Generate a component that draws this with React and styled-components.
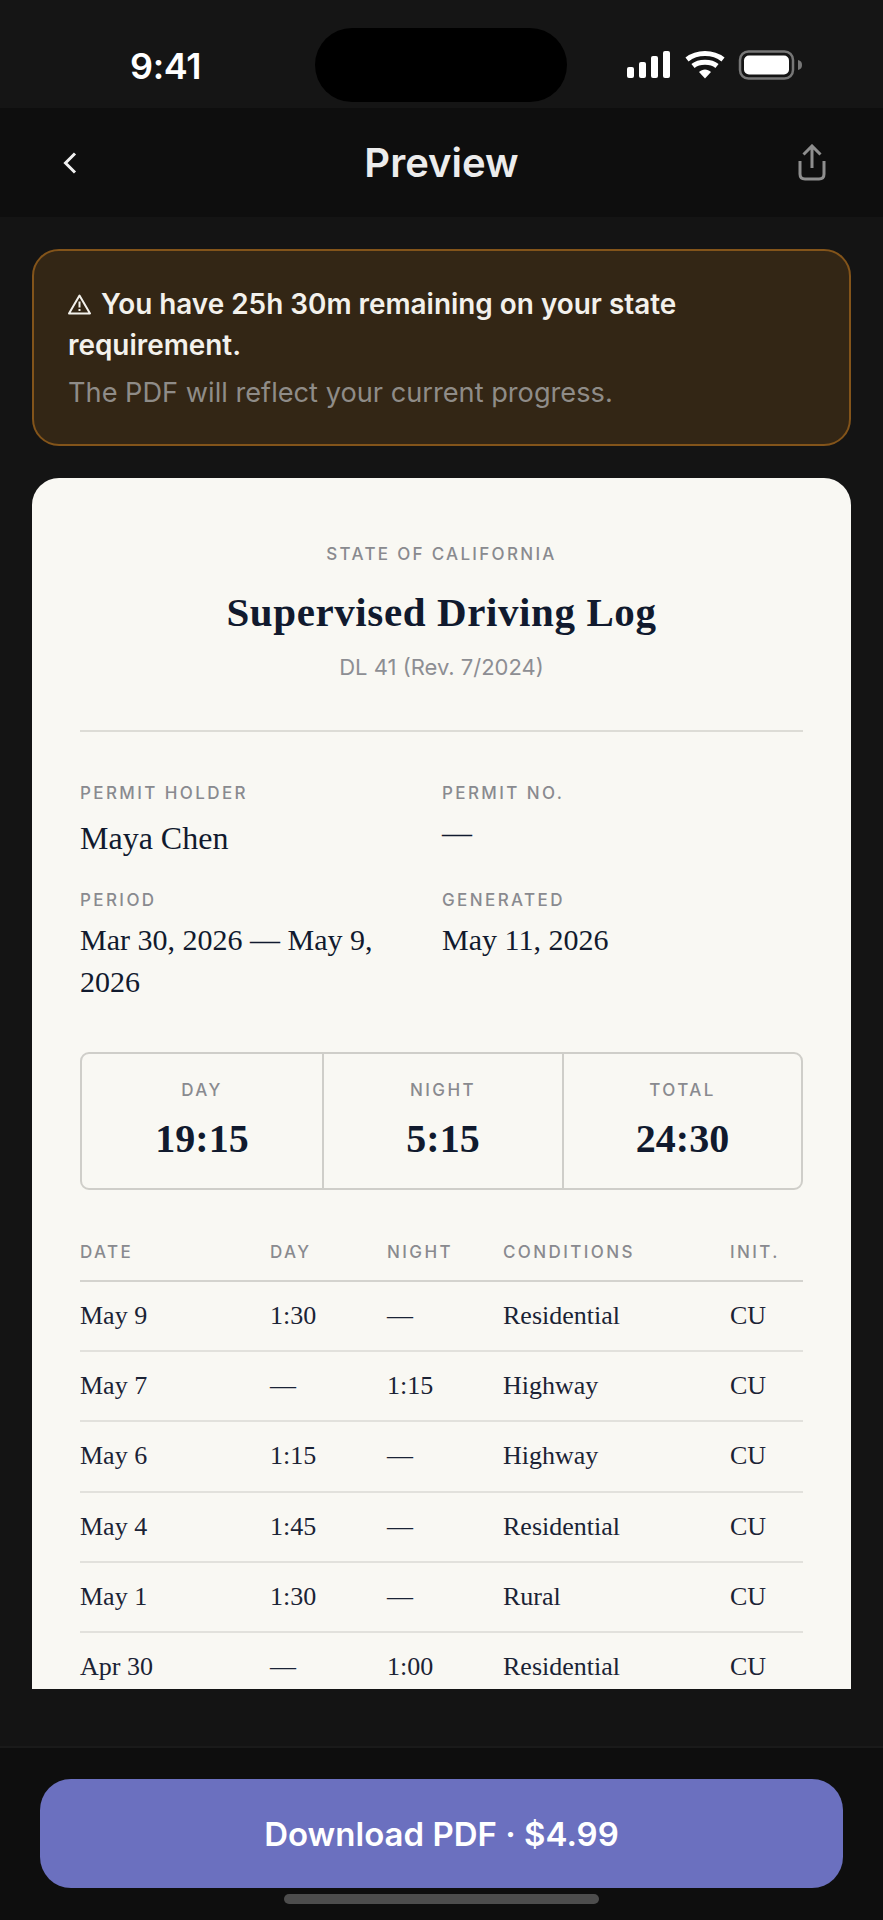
import React from "react";
import styled, { createGlobalStyle } from "styled-components";

const Global = createGlobalStyle`
  html, body { margin: 0; padding: 0; background: #141414; }
  * { box-sizing: border-box; }
`;
const SANS = `Inter, "Liberation Sans", sans-serif`;
const SERIF = `"Liberation Serif", "DejaVu Serif", serif`;

const Page = styled.div`
  width: 883px; height: 1920px; display: flex; flex-direction: column;
  background: #141414; overflow: hidden; font-family: ${SANS};
`;
const StatusBar = styled.div`
  height: 108px; flex: none; background: #151515; display: flex; align-items: center;
  justify-content: space-between; position: relative; padding: 0 80px 0 130px;
`;
const Time = styled.div`
  font-size: 36px; font-weight: 600; color: #fff; letter-spacing: -0.4px; line-height: 1; margin-top: 23px;
`;
const Island = styled.div`
  position: absolute; left: 315px; top: 28px; width: 252px; height: 74px; border-radius: 37px; background: #000;
`;
const StatusIcons = styled.div`
  display: flex; align-items: center; margin-top: 21px;
  svg { display: block; }
`;
const NavBar = styled.div`
  height: 109px; flex: none; background: #0e0e0e; display: grid; grid-template-columns: 1fr auto 1fr;
  align-items: center; padding: 0 56px 0 62px;
`;
const NavRight = styled.div`
  justify-self: end; display: flex;
`;
const NavLeft = styled.div`
  justify-self: start; display: flex;
`;
const NavTitle = styled.div`
  font-size: 40px; font-weight: 600; color: #ececec; transform: translateX(-3px);
`;
const Body = styled.div`
  flex: 1; min-height: 0; padding: 32px 32px 0; display: flex; flex-direction: column; gap: 32px;
`;
const Notice = styled.div`
  flex: none; height: 197px; border: 2px solid #83541a; border-radius: 27px; background: #332615; padding: 33px 34px 0;
`;
const NoticeTitle = styled.div`
  font-size: 27.9px; line-height: 41px; font-weight: 600; color: #f3f1ec;
  svg { vertical-align: -1px; margin-right: 10px; }
`;
const NoticeSub = styled.div`
  font-size: 27.2px; line-height: 41px; margin-top: 6px; color: #8f8c88;
`;
const Paper = styled.div`
  height: 1211px; flex: none; background: #f9f8f3; border-radius: 27px 27px 0 0; overflow: hidden; padding: 66px 48px 0;
`;
const Head = styled.div`
  text-align: center; padding-bottom: 49px; border-bottom: 2px solid #dddcd6;
`;
const Eyebrow = styled.div`
  font-size: 17px; line-height: 20px; font-weight: 500; letter-spacing: 2.3px; color: #898a8f;
`;
const DocTitle = styled.div`
  font-family: ${SERIF}; font-size: 41px; line-height: 50px; font-weight: 700; color: #111a2e; margin-top: 23px; letter-spacing: 0.6px;
`;
const DocSub = styled.div`
  font-size: 22px; line-height: 28px; color: #8d8e93; margin-top: 16px;
`;
const Meta = styled.div`
  display: grid; grid-template-columns: 362px 1fr; row-gap: 31px; padding-top: 51px;
`;
const Label = styled.div`
  font-size: 17px; line-height: 20px; font-weight: 500; letter-spacing: 2.4px; color: #898a8f;
`;
const Value = styled.div`
  font-family: ${SERIF}; font-size: ${(p) => (p.$large ? "32px" : "30px")}; line-height: 42px; color: #111a2e;
  margin-top: ${(p) => (p.$large ? "14px" : "9px")}; padding-right: 30px;
`;
const Stats = styled.div`
  display: grid; grid-template-columns: 240px 240px 1fr; margin-top: 49px; height: 138px;
  border: 2px solid #cfcec9; border-radius: 9px;
`;
const Stat = styled.div`
  text-align: center; padding-top: 26px;
  & + & { border-left: 2px solid #cfcec9; }
`;
const StatValue = styled.div`
  font-family: ${SERIF}; font-size: 40px; line-height: 46px; font-weight: 700; color: #111a2e; margin-top: 16px;
`;
const Table = styled.div`
  margin-top: 49px;
`;
const Row = styled.div`
  display: grid; grid-template-columns: 190px 117px 116px 227px 1fr; align-items: center;
  height: ${(p) => (p.$head ? "43px" : "70.2px")};
  border-bottom: ${(p) => (p.$head ? "2px solid #d4d3ce" : "2px solid #e2e1dc")};
  padding-bottom: ${(p) => (p.$head ? "16px" : "0")};
`;
const HeadCell = styled(Label)``;
const Cell = styled.div`
  font-family: ${SERIF}; font-size: 26px; line-height: 32px; color: #1b2335;
`;
const Footer = styled.div`
  height: 174px; flex: none; background: #0e0e0e; border-top: 2px solid #1a1a1a; padding: 31px 40px 0;
  display: flex; flex-direction: column; align-items: center;
`;
const Button = styled.div`
  width: 100%; height: 109px; flex: none; border-radius: 31px; background: #6b70bf; color: #fff;
  font-size: 33px; font-weight: 600; display: flex; align-items: center; justify-content: center;
`;
const HomeBar = styled.div`
  width: 315px; height: 10px; border-radius: 5px; background: #4d4d4d; margin-top: 6px; flex: none;
`;

const rows = [
  ["May 9", "1:30", "—", "Residential"],
  ["May 7", "—", "1:15", "Highway"],
  ["May 6", "1:15", "—", "Highway"],
  ["May 4", "1:45", "—", "Residential"],
  ["May 1", "1:30", "—", "Rural"],
  ["Apr 30", "—", "1:00", "Residential"],
];

export default function App() {
  return (
    <Page>
      <Global />
      <StatusBar>
        <Time>9:41</Time>
        <Island />
        <StatusIcons>
          <svg width="176" height="30" viewBox="0 0 176 30">
            <rect x="0" y="17" width="7" height="11" rx="2" fill="#fff" />
            <rect x="12" y="12" width="7" height="16" rx="2" fill="#fff" />
            <rect x="24" y="6" width="7" height="22" rx="2" fill="#fff" />
            <rect x="36" y="1" width="7" height="27" rx="2" fill="#fff" />
            <path d="M60 9.500 C70 1.500 86 1.500 96 9.500 M66 16 C72 11 84 11 90 16" fill="none" stroke="#fff" strokeWidth="5" />
            <path d="M72 22 C75.500 18.500 80.500 18.500 84 22 L78 28.500 Z" fill="#fff" />
            <rect x="113" y="1.500" width="53" height="27" rx="8.500" fill="none" stroke="#777" strokeWidth="2.500" />
            <rect x="117" y="5.500" width="45" height="19" rx="5" fill="#fff" />
            <path d="M171 10 C174 10.500 175 12.500 175 15 C175 17.500 174 19.500 171 20 Z" fill="#777" />
          </svg>
        </StatusIcons>
      </StatusBar>
      <NavBar>
        <NavLeft>
          <svg width="16" height="22" viewBox="0 0 16 22">
            <path d="M13 1.500 L3.500 11 L13 20.500" fill="none" stroke="#f0f0f0" strokeWidth="3" />
          </svg>
        </NavLeft>
        <NavTitle>Preview</NavTitle>
        <NavRight>
          <svg width="30" height="37" viewBox="0 0 30 37">
            <path d="M15 24 V2.500 M6.500 10.500 L15 2 L23.500 10.500 M3 17 V30 Q3 35 8 35 H22 Q27 35 27 30 V17" fill="none" stroke="#8e8e8e" strokeWidth="3" />
          </svg>
        </NavRight>
      </NavBar>
      <Body>
        <Notice>
          <NoticeTitle>
            <svg width="23" height="21" viewBox="0 0 23 21">
              <path d="M11.500 1.500 L22 19.500 H1 Z" fill="none" stroke="#f3f1ec" strokeWidth="2" strokeLinejoin="round" />
              <path d="M11.500 7.500 V13.500 M11.500 15 V17" fill="none" stroke="#f3f1ec" strokeWidth="2" />
            </svg>
            You have 25h 30m remaining on your state requirement.
          </NoticeTitle>
          <NoticeSub>The PDF will reflect your current progress.</NoticeSub>
        </Notice>
        <Paper>
          <Head>
            <Eyebrow>STATE OF CALIFORNIA</Eyebrow>
            <DocTitle>Supervised Driving Log</DocTitle>
            <DocSub>DL 41 (Rev. 7/2024)</DocSub>
          </Head>
          <Meta>
            <div><Label>PERMIT HOLDER</Label><Value $large>Maya Chen</Value></div>
            <div><Label>PERMIT NO.</Label><Value>—</Value></div>
            <div><Label>PERIOD</Label><Value>Mar 30, 2026 — May 9, 2026</Value></div>
            <div><Label>GENERATED</Label><Value>May 11, 2026</Value></div>
          </Meta>
          <Stats>
            <Stat><Label>DAY</Label><StatValue>19:15</StatValue></Stat>
            <Stat><Label>NIGHT</Label><StatValue>5:15</StatValue></Stat>
            <Stat><Label>TOTAL</Label><StatValue>24:30</StatValue></Stat>
          </Stats>
          <Table>
            <Row $head>
              <HeadCell>DATE</HeadCell><HeadCell>DAY</HeadCell><HeadCell>NIGHT</HeadCell><HeadCell>CONDITIONS</HeadCell><HeadCell>INIT.</HeadCell>
            </Row>
            {rows.map((r) => (
              <Row key={r[0]}>
                {r.map((c, i) => <Cell key={i}>{c}</Cell>)}
                <Cell>CU</Cell>
              </Row>
            ))}
          </Table>
        </Paper>
      </Body>
      <Footer>
        <Button>Download PDF · $4.99</Button>
        <HomeBar />
      </Footer>
    </Page>
  );
}
